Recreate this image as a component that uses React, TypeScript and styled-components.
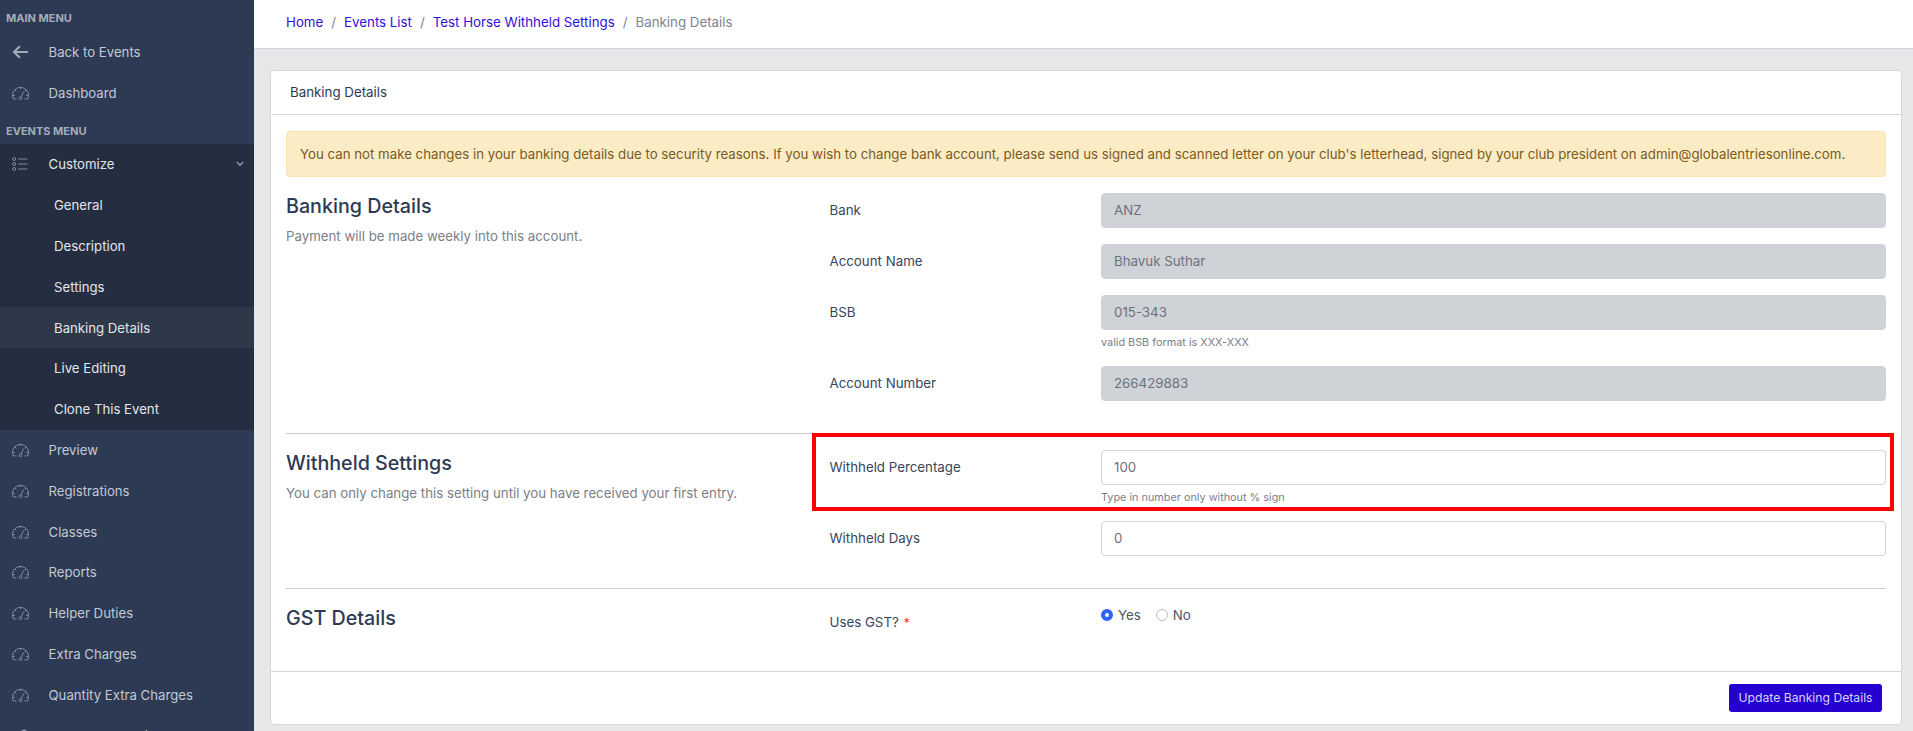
import React from 'react';
import styled, { createGlobalStyle } from 'styled-components';

const Global = createGlobalStyle`
  html, body { margin: 0; padding: 0; height: 731px; overflow: hidden; background: #e5e7e9; }
  body { font-family: Inter, "Liberation Sans", sans-serif; font-size: 13.3px; color: #2d3a54; }
  * { box-sizing: border-box; }
`;

const Shell = styled.div`
  display: flex;
  height: 731px;
  overflow: hidden;
`;
const Sidebar = styled.nav`
  width: 254px;
  flex: none;
  background: #2d3a54;
  height: 731px;
  padding-top: 0.5px;
  overflow: hidden;
`;
const MenuLabel = styled.div`
  height: 31px;
  padding: 4px 0 0 6px;
  display: flex;
  align-items: center;
  font-size: 11px;
  font-weight: 700;
  color: #a4acba;
`;
const NavItem = styled.div<{ $open?: boolean }>`
  height: 40.8px;
  flex: none;
  display: flex;
  align-items: center;
  padding-left: 12px;
  font-size: 13.2px;
  color: ${p => (p.$open ? '#e2e6ec' : '#c3c9d3')};
`;
const IconSlot = styled.span`
  width: 36.5px;
  flex: none;
  display: flex;
  align-items: center;
  color: #8b94a5;
`;
const Chevron = styled.span`
  margin-left: auto;
  margin-right: 10px;
  display: flex;
  color: #8b94a5;
`;
const SubMenu = styled.div`
  background: #252e40;
  height: 285.6px;
`;
const SubItem = styled.div<{ $active?: boolean }>`
  height: 40.8px;
  display: flex;
  align-items: center;
  padding-left: 54px;
  font-size: 13.2px;
  color: #e2e6ec;
  background: ${p => (p.$active ? '#2f3849' : 'transparent')};
`;
const Main = styled.main`
  flex: 1;
  min-width: 0;
`;
const TopBar = styled.header`
  height: 49px;
  background: #fff;
  border-bottom: 1px solid #d1d4da;
  padding-left: 32px;
  display: flex;
  align-items: center;
  font-size: 13.3px;
  padding-bottom: 5px;
`;
const Crumb = styled.a`
  color: #2f12d8;
`;
const CrumbSep = styled.span`
  color: #7b8494;
  margin: 0 8px;
`;
const CrumbCurrent = styled.span`
  color: #7b8494;
`;
const Card = styled.section`
  margin: 20.5px 11px 0 16px;
  height: 655px;
  background: #fff;
  border: 1px solid #d5d7dc;
  border-radius: 4px;
  display: flex;
  flex-direction: column;
`;
const CardHeader = styled.div`
  height: 44px;
  flex: none;
  padding-left: 19px;
  display: flex;
  align-items: center;
  font-size: 13.3px;
  border-bottom: 1px solid #d5d7dc;
  color: #2d3a54;
`;
const CardBody = styled.div`
  flex: 1;
  min-height: 0;
  padding: 16px 15px 0;
`;
const Alert = styled.div`
  height: 46px;
  display: flex;
  align-items: center;
  padding-left: 13px;
  background: #fbecc6;
  border: 1px solid #fae3b0;
  border-radius: 4px;
  color: #7b5a22;
  font-size: 13.28px;
  margin-bottom: 16px;
`;
const Section = styled.div<{ $divided?: boolean }>`
  display: grid;
  grid-template-columns: 543.5px 1fr;
  padding-bottom: ${p => (p.$divided ? '16px' : '0')};
  margin-bottom: ${p => (p.$divided ? '16px' : '0')};
  border-bottom: ${p => (p.$divided ? '1px solid #cdcfd3' : 'none')};
`;
const Intro = styled.div`
  display: flex;
  flex-direction: column;
`;
const Heading = styled.h2`
  margin: 0;
  font-size: 19.7px;
  line-height: 26px;
  font-weight: 500;
  color: #2d3a54;
`;
const Sub = styled.p`
  margin: 7px 0 0;
  font-size: 13.28px;
  line-height: 20px;
  color: #7b8088;
`;
const Field = styled.div`
  position: relative;
  display: grid;
  grid-template-columns: 271.5px 1fr;
  margin-bottom: 16px;
`;
const Label = styled.label`
  height: 35px;
  display: flex;
  align-items: center;
  gap: 5px;
  font-size: 13.3px;
  color: #39455c;
`;
const Req = styled.span`
  color: #e3342f;
  font-size: 12px;
`;
const Input = styled.input<{ disabled?: boolean }>`
  display: block;
  width: 100%;
  height: 35px;
  padding: 0 12px;
  border: 1px solid ${p => (p.disabled ? '#cfd2d7' : '#d1d4da')};
  border-radius: 4px;
  background: ${p => (p.disabled ? '#cfd2d7' : '#fff')};
  color: #6b7280;
  -webkit-text-fill-color: #6b7280;
  opacity: 1;
  font: 400 13.3px Inter, "Liberation Sans", sans-serif;
  outline: none;
`;
const Hint = styled.small`
  display: block;
  margin-top: 4px;
  font-size: 10.85px;
  line-height: 16px;
  color: #7b8088;
`;
const RedBox = styled.div`
  position: absolute;
  left: -17.5px;
  right: -8px;
  top: -17px;
  bottom: -6px;
  border: 4px solid #fe0000;
  pointer-events: none;
`;
const Radios = styled.div`
  display: flex;
  align-items: center;
  gap: 15px;
  height: 20px;
`;
const RadioLabel = styled.span`
  display: flex;
  align-items: center;
  gap: 5px;
  font-size: 13.3px;
  color: #4b5568;
`;
const RadioDot = styled.span<{ $on?: boolean }>`
  width: 12px;
  height: 12px;
  border-radius: 50%;
  background: #fff;
  border: ${p => (p.$on ? '4px solid #2a63f6' : '1px solid #b9bdc5')};
`;
const CardFooter = styled.div`
  height: 53px;
  flex: none;
  border-top: 1px solid #d5d7dc;
  display: flex;
  align-items: center;
  justify-content: flex-end;
  padding-right: 19px;
`;
const Button = styled.button`
  width: 153px;
  height: 28px;
  border: 0;
  border-radius: 3px;
  background: #2500d0;
  color: #d8d4f7;
  font: 400 12.2px Inter, "Liberation Sans", sans-serif;
`;

const Gauge = () => (
  <svg width="17" height="14" viewBox="0 0 17 14" fill="none" stroke="currentColor" strokeWidth="0.9">
    <path d="M4.5 12.9H1.3A8 8 0 1 1 15.7 12.9H12.5" />
    <path d="M8.5 1.2V3M3 4 4.3 5.3M1 9.5H2.8M14 4 12.7 5.3M16 9.5H14.2M9.1 10.9 11.6 5.5" />
    <circle cx="8.5" cy="12.3" r="1.4" />
  </svg>
);
const ArrowBack = () => (
  <svg width="17" height="14" viewBox="0 0 17 14" fill="none" stroke="#a3aab7" strokeWidth="2.1">
    <path d="M16 7H2.5M7.8 1.2 2 7l5.8 5.8" />
  </svg>
);
const ListIcon = () => (
  <svg width="16" height="14" viewBox="0 0 16 14" fill="none" stroke="currentColor" strokeWidth="0.9">
    <circle cx="2.2" cy="2" r="1.5" />
    <circle cx="2.2" cy="7" r="1.5" />
    <circle cx="2.2" cy="12" r="1.5" />
    <path d="M6 2H15.5M6 7H15.5M6 12H15.5" />
  </svg>
);
const Down = () => (
  <svg width="8" height="6" viewBox="0 0 8 6" fill="none" stroke="currentColor" strokeWidth="1.5">
    <path d="M1 1 4 4.2 7 1" />
  </svg>
);
const Blob = () => (
  <svg width="17" height="14" viewBox="0 0 17 14" fill="#8b94a5">
    <path d="M9 3C10 0 13 0 14 1S15 7 15 14H4C4 9 6 5 9 3Z" />
  </svg>
);

const Item = ({ icon, label }: { icon: React.ReactNode; label: string }) => (
  <NavItem>
    <IconSlot>{icon}</IconSlot>
    {label}
  </NavItem>
);

const lowerItems = ['Preview', 'Registrations', 'Classes', 'Reports', 'Helper Duties', 'Extra Charges', 'Quantity Extra Charges'];
const subItems = ['General', 'Description', 'Settings', 'Banking Details', 'Live Editing', 'Clone This Event'];

export default function App() {
  return (
    <Shell>
      <Global />
      <Sidebar>
        <MenuLabel>MAIN MENU</MenuLabel>
        <Item icon={<ArrowBack />} label="Back to Events" />
        <Item icon={<Gauge />} label="Dashboard" />
        <MenuLabel>EVENTS MENU</MenuLabel>
        <SubMenu>
          <NavItem $open>
            <IconSlot><ListIcon /></IconSlot>
            Customize
            <Chevron><Down /></Chevron>
          </NavItem>
          {subItems.map(s => (
            <SubItem key={s} $active={s === 'Banking Details'}>{s}</SubItem>
          ))}
        </SubMenu>
        {lowerItems.map(s => (
          <Item key={s} icon={<Gauge />} label={s} />
        ))}
        <Item icon={<Blob />} label="Health Declaration" />
      </Sidebar>
      <Main>
        <TopBar>
          <Crumb>Home</Crumb>
          <CrumbSep>/</CrumbSep>
          <Crumb>Events List</Crumb>
          <CrumbSep>/</CrumbSep>
          <Crumb>Test Horse Withheld Settings</Crumb>
          <CrumbSep>/</CrumbSep>
          <CrumbCurrent>Banking Details</CrumbCurrent>
        </TopBar>
        <Card>
          <CardHeader>Banking Details</CardHeader>
          <CardBody>
            <Alert>You can not make changes in your banking details due to security reasons. If you wish to change bank account, please send us signed and scanned letter on your club's letterhead, signed by your club president on admin@globalentriesonline.com.</Alert>
            <Section $divided>
              <Intro>
                <Heading>Banking Details</Heading>
                <Sub>Payment will be made weekly into this account.</Sub>
              </Intro>
              <div>
                <Field>
                  <Label>Bank</Label>
                  <div><Input disabled value="ANZ" readOnly /></div>
                </Field>
                <Field>
                  <Label>Account Name</Label>
                  <div><Input disabled value="Bhavuk Suthar" readOnly /></div>
                </Field>
                <Field>
                  <Label>BSB</Label>
                  <div>
                    <Input disabled value="015-343" readOnly />
                    <Hint>valid BSB format is XXX-XXX</Hint>
                  </div>
                </Field>
                <Field>
                  <Label>Account Number</Label>
                  <div><Input disabled value="266429883" readOnly /></div>
                </Field>
              </div>
            </Section>
            <Section $divided>
              <Intro>
                <Heading>Withheld Settings</Heading>
                <Sub>You can only change this setting until you have received your first entry.</Sub>
              </Intro>
              <div>
                <Field>
                  <RedBox />
                  <Label>Withheld Percentage</Label>
                  <div>
                    <Input value="100" readOnly />
                    <Hint>Type in number only without % sign</Hint>
                  </div>
                </Field>
                <Field>
                  <Label>Withheld Days</Label>
                  <div><Input value="0" readOnly /></div>
                </Field>
              </div>
            </Section>
            <Section>
              <Intro>
                <Heading>GST Details</Heading>
              </Intro>
              <Field>
                <Label>Uses GST? <Req>*</Req></Label>
                <Radios>
                  <RadioLabel><RadioDot $on />Yes</RadioLabel>
                  <RadioLabel><RadioDot />No</RadioLabel>
                </Radios>
              </Field>
            </Section>
          </CardBody>
          <CardFooter>
            <Button>Update Banking Details</Button>
          </CardFooter>
        </Card>
      </Main>
    </Shell>
  );
}
